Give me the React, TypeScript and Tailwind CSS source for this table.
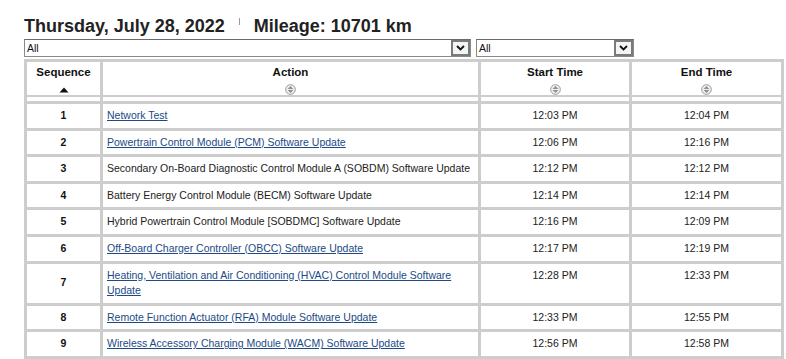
import React from 'react';

type Row = {
  seq: number;
  action: string;
  link: boolean;
  start: string;
  end: string;
};

const rows: Row[] = [
  { seq: 1, action: 'Network Test', link: true, start: '12:03 PM', end: '12:04 PM' },
  { seq: 2, action: 'Powertrain Control Module (PCM) Software Update', link: true, start: '12:06 PM', end: '12:16 PM' },
  { seq: 3, action: 'Secondary On-Board Diagnostic Control Module A (SOBDM) Software Update', link: false, start: '12:12 PM', end: '12:12 PM' },
  { seq: 4, action: 'Battery Energy Control Module (BECM) Software Update', link: false, start: '12:14 PM', end: '12:14 PM' },
  { seq: 5, action: 'Hybrid Powertrain Control Module [SOBDMC] Software Update', link: false, start: '12:16 PM', end: '12:09 PM' },
  { seq: 6, action: 'Off-Board Charger Controller (OBCC) Software Update', link: true, start: '12:17 PM', end: '12:19 PM' },
  { seq: 7, action: 'Heating, Ventilation and Air Conditioning (HVAC) Control Module Software Update', link: true, start: '12:28 PM', end: '12:33 PM' },
  { seq: 8, action: 'Remote Function Actuator (RFA) Module Software Update', link: true, start: '12:33 PM', end: '12:55 PM' },
  { seq: 9, action: 'Wireless Accessory Charging Module (WACM) Software Update', link: true, start: '12:56 PM', end: '12:58 PM' },
];

function SortBoth() {
  return (
    <svg width="11" height="11" viewBox="0 0 10 10" className="mx-auto block">
      <circle cx="5" cy="5" r="4.4" fill="#efefef" stroke="#9c9c9c" strokeWidth="0.9" />
      <path d="M2.4 4.5 L5 1.9 L7.6 4.5 Z" fill="#8e8e8e" />
      <path d="M2.4 5.5 L5 8.1 L7.6 5.5 Z" fill="#8e8e8e" />
    </svg>
  );
}

function SortUp() {
  return (
    <svg width="10" height="6" viewBox="0 0 10 6" className="mx-auto block">
      <path d="M0.5 5.5 L5 0.5 L9.5 5.5 Z" fill="#111" />
    </svg>
  );
}

function FakeSelect({ width }: { width: string }) {
  return (
    <div
      className={`${width} flex h-[18px] items-stretch border border-[#8a8a8a] border-t-[#6a6a6a] bg-white`}
    >
      <span className="flex-1 pl-[2px] text-[10.5px] leading-[16px] text-[#111]">All</span>
      <span className="flex w-[19px] items-center justify-center border-2 border-[#7a7a7a] bg-[#f4f4f4]">
        <svg width="9" height="6" viewBox="0 0 9 6">
          <path d="M1 1 L4.5 4.5 L8 1" fill="none" stroke="#111" strokeWidth="1.8" />
        </svg>
      </span>
    </div>
  );
}

function HeadCell({ label, up, className }: { label: string; up?: boolean; className: string }) {
  return (
    <th className={`${className} bg-white p-0 pt-[2px] pb-[4px] align-top font-bold`}>
      <div className="text-[11.5px] leading-[16px] text-[#111]">{label}</div>
      <div className="mt-[5px] flex h-[9px] items-center">{up ? <SortUp /> : <SortBoth />}</div>
      <div className="mt-[1px] h-[2px] bg-[#cdcdcd]" />
    </th>
  );
}

export default function App() {
  return (
    <div className="min-h-[359px] bg-white pl-[24px] pt-[15px] font-['Liberation_Sans',Arial,sans-serif] text-[#222]">
      <div className="flex items-start text-[18px] font-bold leading-[22px] text-[#222]">
        <span>Thursday, July 28, 2022</span>
        <span className="mx-[14px] mt-[3px] inline-block h-[7px] w-px bg-[#9a9a9a]" />
        <span>Mileage: 10701 km</span>
      </div>

      <div className="mt-[2px] flex gap-[5px]">
        <FakeSelect width="w-[447px]" />
        <FakeSelect width="w-[158px]" />
      </div>

      <table className="mt-[2px] w-[760px] table-fixed border-separate border-spacing-[3px] bg-[#cdcdcd]">
        <colgroup>
          <col className="w-[73px]" />
          <col className="w-[375px]" />
          <col className="w-[148px]" />
          <col className="w-[149px]" />
        </colgroup>
        <thead>
          <tr>
            <HeadCell label="Sequence" up className="text-center" />
            <HeadCell label="Action" className="text-center" />
            <HeadCell label="Start Time" className="text-center" />
            <HeadCell label="End Time" className="text-center" />
          </tr>
        </thead>
        <tbody className="text-[10.5px] leading-[15.6px]">
          {rows.map((r) => (
            <tr key={r.seq}>
              <td className="bg-white py-[4px] text-center align-middle font-bold text-[#111]">{r.seq}</td>
              <td className="bg-white px-[4px] py-[4px] align-top">
                {r.link ? (
                  <a href="#" className="text-[#1c4a86] underline">
                    {r.action}
                  </a>
                ) : (
                  <span className="text-[#222]">{r.action}</span>
                )}
              </td>
              <td className="bg-white py-[4px] text-center align-top text-[#222]">{r.start}</td>
              <td className="bg-white py-[4px] text-center align-top text-[#222]">{r.end}</td>
            </tr>
          ))}
        </tbody>
      </table>
    </div>
  );
}
